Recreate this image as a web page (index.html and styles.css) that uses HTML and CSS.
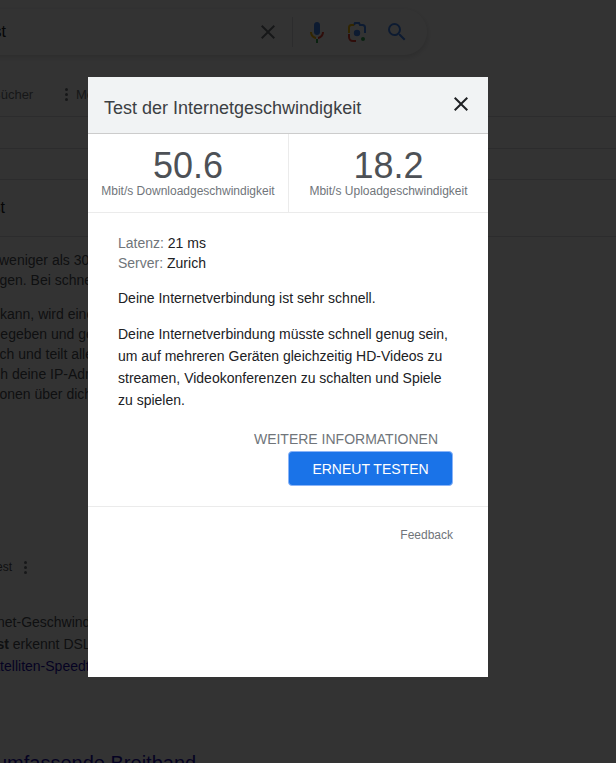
FILE: index.html
```html
<!DOCTYPE html>
<html lang="de">
<head>
<meta charset="utf-8">
<title>Test der Internetgeschwindigkeit</title>
<link rel="stylesheet" href="styles.css">
</head>
<body>
<div class="page">
  <div class="searchbar">
    <span class="query">Speedtest</span>
    <div class="search-icons">
      <svg class="ic-clear" width="24" height="24" viewBox="0 0 24 24"><path fill="#70757a" d="M19 6.41 17.59 5 12 10.59 6.41 5 5 6.41 10.59 12 5 17.59 6.41 19 12 13.41 17.59 19 19 17.59 13.41 12z"/></svg>
      <span class="sep"></span>
      <svg class="ic-mic" width="24" height="24" viewBox="0 0 24 24"><path fill="#4285f4" d="M12 15c1.7 0 3-1.3 3-3V5c0-1.7-1.3-3-3-3S9 3.300 9 5v7c0 1.700 1.300 3 3 3z"/><path fill="#34a853" d="M11 18.900h2V23h-2z"/><path fill="#fbbc04" d="M7 12H5c0 3.600 2.600 6.500 6 6.900v-2C8.700 16.500 7 14.500 7 12z"/><path fill="#ea4335" d="M19 12h-2c0 2.500-1.700 4.500-4 4.900v2c3.400-.4 6-3.300 6-6.900z"/></svg>
      <svg class="ic-lens" width="24" height="24" viewBox="0 0 24 24"><circle fill="#4285f4" cx="12" cy="13" r="3.200"/><circle fill="#34a853" cx="18" cy="19" r="2"/><path fill="none" stroke="#4285f4" stroke-width="2" d="M9 5l1-2h4l1 2h2.500c1.400 0 2.500 1.100 2.500 2.500V13"/><path fill="none" stroke="#fbbc04" stroke-width="2" d="M4 13V7.500C4 6.100 5.100 5 6.500 5H9"/><path fill="none" stroke="#ea4335" stroke-width="2" d="M4 14v3c0 2 1.500 4 4 4h3"/></svg>
      <svg class="ic-search" width="24" height="24" viewBox="0 0 24 24"><path fill="#4285f4" d="M15.500 14h-.79l-.28-.27A6.470 6.470 0 0 0 16 9.500 6.500 6.500 0 1 0 9.500 16c1.610 0 3.090-.59 4.230-1.570l.27.28v.79l5 4.990L20.490 19l-4.990-5zm-6 0C7.010 14 5 11.990 5 9.500S7.010 5 9.500 5 14 7.010 14 9.500 11.990 14 9.500 14z"/></svg>
    </div>
  </div>
  <div class="tabs">
    <span class="tab-a">Bücher</span>
    <span class="tab-dots"><i></i><i></i><i></i></span>
    <span class="tab-b">Mehr</span>
  </div>
  <div class="band"></div>
  <div class="band short"></div>
  <div class="band title">Speedtest</div>
  <div class="para first">
    <p class="l-wen">weniger als 30 Sekunden</p>
    <p class="l-gen">Anfragen. Bei schnellen</p>
  </div>
  <div class="para second">
    <p class="l-kann">kann, wird eine Verbindung</p>
    <p class="l-ege">angegeben und gemessen</p>
    <p class="l-ch">auch und teilt alle Daten</p>
    <p class="l-h">durch deine IP-Adresse</p>
    <p class="l-on">Informationen über dich</p>
  </div>
  <div class="source"><span class="src-name">Speedtest</span> <span class="tab-dots"><i></i><i></i><i></i></span></div>
  <div class="para third">
    <p class="l-net">Internet-Geschwindigkeit</p>
    <p class="l-st"><b>Speedtest</b> erkennt DSL und Kabel</p>
    <p class="l-sat linkline">Satelliten-Speedtest</p>
  </div>
  <div class="result-title">umfassende Breitband</div>
</div>

<div class="overlay"></div>

<section class="dialog">
  <header class="dialog-head">
    <h1>Test der Internetgeschwindigkeit</h1>
    <svg class="close" width="24" height="24" viewBox="0 0 24 24"><path fill="#202124" d="M19 6.410 17.590 5 12 10.590 6.410 5 5 6.410 10.590 12 5 17.590 6.410 19 12 13.410 17.590 19 19 17.590 13.410 12z"/></svg>
  </header>
  <div class="stats">
    <div class="stat"><div class="num">50.6</div><div class="unit">Mbit/s Downloadgeschwindigkeit</div></div>
    <div class="stat"><div class="num">18.2</div><div class="unit">Mbit/s Uploadgeschwindigkeit</div></div>
  </div>
  <div class="body">
    <div class="meta"><span class="lab">Latenz:</span> 21 ms</div>
    <div class="meta"><span class="lab">Server:</span> Zurich</div>
    <p class="msg">Deine Internetverbindung ist sehr schnell.</p>
    <p class="msg long">Deine Internetverbindung müsste schnell genug sein, um auf mehreren Geräten gleichzeitig HD-Videos zu streamen, Videokonferenzen zu schalten und Spiele zu spielen.</p>
    <div class="actions">
      <a class="more">WEITERE INFORMATIONEN</a>
      <button class="retry">ERNEUT TESTEN</button>
    </div>
  </div>
  <div class="foot"><a>Feedback</a></div>
</section>
</body>
</html>
```
FILE: styles.css
```css
* { box-sizing: border-box; }
html, body { margin: 0; height: 763px; overflow: hidden; }
body { font-family: "Liberation Sans", Arial, sans-serif; background: #fff; color: #202124; position: relative; }

.page { width: 616px; height: 763px; overflow: hidden; padding-top: 9px; }
.searchbar {
  width: 447px; height: 46px; margin-left: -20px; border-radius: 0 24px 24px 0;
  box-shadow: 0 2px 5px 1px rgba(64,60,67,.16);
  display: flex; align-items: center; justify-content: space-between; padding-left: 20px;
  padding-right: 18px; font-size: 16px;
}
.query { margin-left: -66px; width: 71px; white-space: nowrap; }
.search-icons { display: flex; align-items: center; }
.ic-clear { margin-right: 12px; }
.sep { width: 1px; height: 30px; background: #dadce0; margin-right: 12px; }
.ic-mic { margin-right: 16px; }
.ic-lens { margin-right: 16px; }

.tabs { height: 62px; padding-top: 32px; display: flex; font-size: 13px; color: #70757a; border-bottom: 1px solid #dadce0; line-height: 16px; }
.tab-a { margin-left: -8px; width: 73px; flex: none; }
.tab-b { margin-left: 8px; }
.tab-dots { display: inline-flex; flex-direction: column; gap: 2px; width: 3px; margin-top: 1px; }
.tab-dots i { display: block; width: 3px; height: 3px; border-radius: 50%; background: #70757a; }
.band { height: 32px; border-bottom: 1px solid #dadce0; }
.band.short { height: 31px; }
.band.title { height: 56px; line-height: 56px; font-size: 16px; margin-left: -67px; border-bottom: 0; box-shadow: 0 1px 0 #dadce0; }
.para { font-size: 14px; line-height: 20px; color: #4d5156; white-space: nowrap; }
.para p { margin: 0; }
.para .l-wen { margin-left: -1px; }
.para .l-gen { margin-left: -34px; }
.para .l-ege { margin-left: -23px; }
.para .l-ch { margin-left: -16px; }
.para .l-h { margin-left: -27px; }
.para .l-on { margin-left: -55px; }
.para .l-net { margin-left: -31px; }
.para .l-st { margin-left: -58px; }
.para .l-sat { margin-left: -17px; }
.first { margin-top: 14px; }
.second { margin-top: 14px; }
.source { margin-top: 153px; margin-left: -42px; font-size: 12px; display: flex; gap: 12px; line-height: 20px; color: #4d5156; }
.source .tab-dots { margin-top: 4px; }
.third { margin-top: 34px; line-height: 22px; }
.linkline { color: #1a0dab; }
.result-title { margin-top: 73px; margin-left: -4px; font-size: 20px; line-height: 26px; color: #1a0dab; white-space: nowrap; }

.overlay { position: absolute; inset: 0; background: rgba(0,0,0,.8); }

.dialog { position: absolute; left: 88px; top: 77px; width: 400px; height: 600px; background: #fff; }
.dialog-head { height: 57px; background: #f1f3f4; border-bottom: 1px solid #ccc; position: relative; padding: 21px 16px 0; }
.dialog-head h1 { margin: 0; font-size: 18px; font-weight: 400; line-height: 21px; color: #3c4043; }
.close { position: absolute; right: 15px; top: 15px; }

.stats { display: flex; height: 79px; border-bottom: 1px solid #ebebeb; }
.stat { flex: 0 0 200px; text-align: center; padding-top: 14px; }
.stat + .stat { border-left: 1px solid #ebebeb; }
.num { font-size: 36px; line-height: 36px; color: #4d5156; }
.unit { font-size: 12px; line-height: 14px; color: #70757a; }

.body { padding: 20px 35px 0 30px; height: 294px; border-bottom: 1px solid #ebebeb; font-size: 14px; }
.meta { line-height: 20px; color: #202124; }
.lab { color: #70757a; }
.msg { margin: 14px 0 0; line-height: 22px; }
.msg.long { margin-top: 14px; }
.actions { display: flex; flex-direction: column; align-items: flex-end; margin-top: 19px; }
.more { color: #70757a; line-height: 18px; margin-right: 15px; }
.retry { width: 165px; height: 35px; margin-top: 3px; border: 1px solid #8ab4f8; border-radius: 4px; background: #1a73e8; color: #fff; font: 14px "Liberation Sans", Arial, sans-serif; }

.foot { padding: 21px 35px 0 0; text-align: right; font-size: 12px; line-height: 14px; color: #70757a; }
```
